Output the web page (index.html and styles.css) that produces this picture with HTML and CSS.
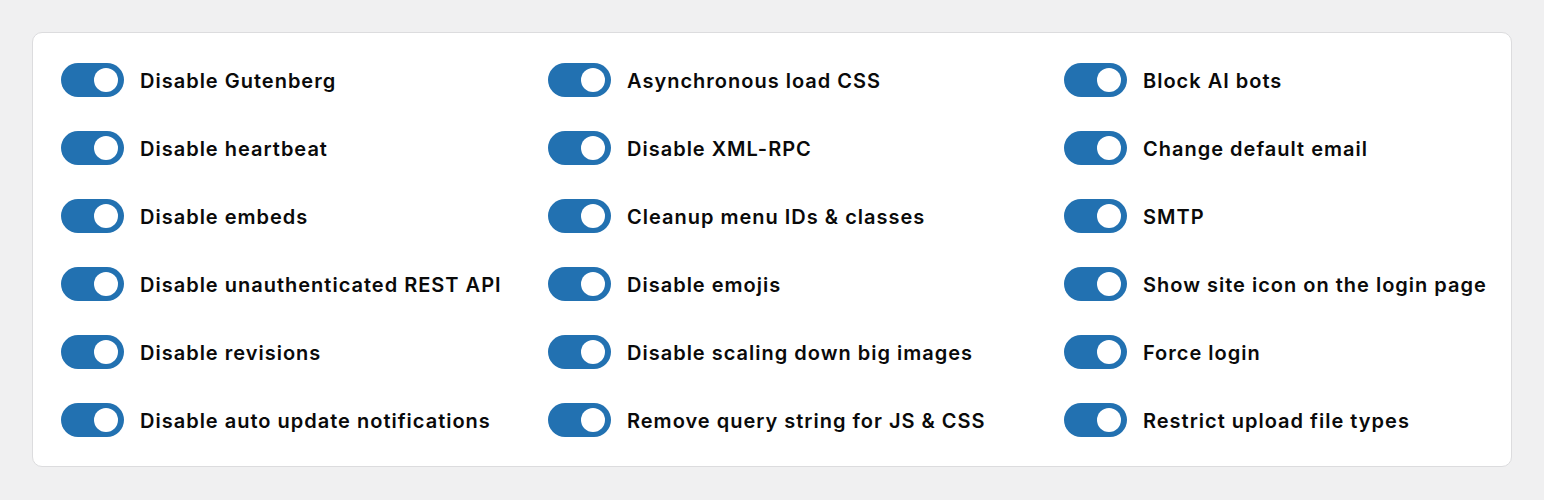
FILE: index.html
```html
<!DOCTYPE html>
<html lang="en">
<head>
  <meta charset="UTF-8" />
  <title>Tweaks</title>
  <link rel="stylesheet" href="styles.css">
</head>
<body>

  <div class="card">
    <div class="toggles">
      <!-- Column 1 -->
      <div class="col">
        <label class="toggle"><span class="switch on"></span>Disable Gutenberg</label>
        <label class="toggle"><span class="switch on"></span>Disable heartbeat</label>
        <label class="toggle"><span class="switch on"></span>Disable embeds</label>
        <label class="toggle"><span class="switch on"></span>Disable unauthenticated REST API</label>
        <label class="toggle"><span class="switch on"></span>Disable revisions</label>
        <label class="toggle"><span class="switch on"></span>Disable auto update notifications</label>
      </div>

      <!-- Column 2 -->
      <div class="col">
        <label class="toggle"><span class="switch on"></span>Asynchronous load CSS</label>
        <label class="toggle"><span class="switch on"></span>Disable XML-RPC</label>
        <label class="toggle"><span class="switch on"></span>Cleanup menu IDs &amp; classes</label>
        <label class="toggle"><span class="switch on"></span>Disable emojis</label>
        <label class="toggle"><span class="switch on"></span>Disable scaling down big images</label>
        <label class="toggle"><span class="switch on"></span>Remove query string for JS &amp; CSS</label>
      </div>

      <!-- Column 3 -->
      <div class="col">
        <label class="toggle"><span class="switch on"></span>Block AI bots</label>
        <label class="toggle"><span class="switch on"></span>Change default email</label>
        <label class="toggle"><span class="switch on"></span>SMTP</label>
        <label class="toggle"><span class="switch on"></span>Show site icon on the login page</label>
        <label class="toggle"><span class="switch on"></span>Force login</label>
        <label class="toggle"><span class="switch on"></span>Restrict upload file types</label>
      </div>
    </div>
  </div>

</body>
</html>
```

FILE: styles.css
```css
body {
  margin: 0;
  padding: 32px;
  background: #f0f0f1;
  font-family: Inter, "Noto Sans", sans-serif;
}
.card {
  background: #fff;
  border: 1px solid #dcdcde;
  border-radius: 10px;
  padding: 30px 28px 29px;
}
.toggles {
  display: grid;
  grid-template-columns: 487px 516px auto;
}
.col {
  display: flex;
  flex-direction: column;
  gap: 34px;
}
.toggle {
  display: flex;
  align-items: center;
  gap: 16px;
  height: 34px;
  padding-top: 2px;
  box-sizing: border-box;
  font-size: 20px;
  font-weight: 600;
  letter-spacing: 1px;
  color: #0a0a0a;
  white-space: nowrap;
  cursor: pointer;
}
.switch {
  position: relative;
  flex: none;
  width: 63px;
  height: 34px;
  margin-top: -2px;
  border-radius: 17px;
  background: #c3c4c7;
}
.switch::after {
  content: "";
  position: absolute;
  top: 5px;
  left: 5px;
  width: 24px;
  height: 24px;
  border-radius: 50%;
  background: #fff;
}
.switch.on {
  background: #2271b1;
}
.switch.on::after {
  left: 33px;
}
```
